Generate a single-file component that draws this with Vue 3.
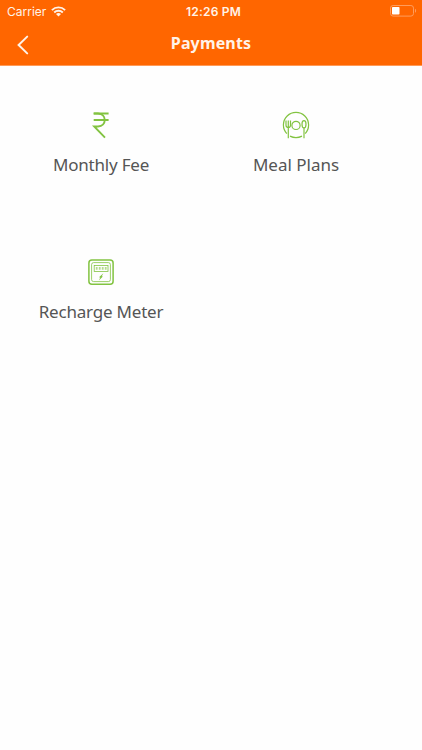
<template>
  <div class="screen">
    <header class="header">
      <div class="status-bar">
        <div class="status-left">
          <span class="carrier">Carrier</span>
          <svg class="wifi" width="15" height="11" viewBox="0 0 15 11">
            <path d="M0.9 4.1C4.6 0.5 10.4 0.5 14.1 4.1" />
            <path d="M3.2 6.5C5.6 4.2 9.4 4.2 11.8 6.5" />
            <path class="wifi-dot" d="M5 8C6.4 6.7 8.6 6.7 10 8L7.5 10.5Z" />
          </svg>
        </div>
        <span class="clock">12:26 PM</span>
        <svg class="battery" width="27" height="12" viewBox="0 0 27 12">
          <rect class="battery-case" x="0.5" y="0.5" width="23" height="10.6" rx="2.6" />
          <rect class="battery-level" x="2" y="2" width="7.5" height="7.6" rx="0.8" />
          <path class="battery-tip" d="M25 3.8C26.5 4.4 26.5 7.2 25 7.8Z" />
        </svg>
      </div>
      <div class="nav-bar">
        <button class="back-btn" aria-label="Back">
          <svg width="12" height="20" viewBox="0 0 12 20">
            <path d="M10.2 1.6L1.6 10L10.2 18.4" />
          </svg>
        </button>
        <h1 class="title">Payments</h1>
      </div>
    </header>

    <main class="menu">
      <button v-for="item in items" :key="item.icon" class="menu-item">
        <svg v-if="item.icon === 'rupee'" class="icon" width="28" height="28" viewBox="0 0 28 28">
          <g class="rupee">
            <path d="M6.7 2.5H21.6M6.7 9H21.6" />
            <path d="M6.7 2.5H11C20 2.8 20 15.3 11 15.5H7.2L18 26.6" />
          </g>
        </svg>
        <svg v-else-if="item.icon === 'meal'" class="icon" width="28" height="28" viewBox="0 0 28 28">
          <path d="M4.8 22.6A12.6 12.6 0 1 1 23.2 22.6M8 25.1Q14 28.2 20 25.1" />
          <circle cx="14" cy="14.4" r="4.1" />
          <path d="M4 9.6V14.2Q4 16.4 6.3 16.4Q8.5 16.4 8.5 14.2V9.6M6.3 9.6V27.2" />
          <ellipse cx="22" cy="13.2" rx="2" ry="3.6" />
          <path d="M22 16.8V27.2" />
        </svg>
        <svg v-else class="icon" width="28" height="28" viewBox="0 0 28 28">
          <rect class="meter-case" x="1.9" y="1.9" width="24.2" height="24.4" rx="3" />
          <rect class="meter-inner" x="4.6" y="4.6" width="18.8" height="19" rx="2" />
          <rect class="meter-inner" x="7.2" y="7.4" width="13.8" height="6" />
          <path class="meter-digits" d="M8.8 10.4H20" />
          <path class="bolt" d="M16.4 15.2L12 19.2L13.3 19.5L11.8 22.6L15.9 18.6L14.8 18.2Z" />
        </svg>
        <span class="label" :class="item.icon">{{ item.label }}</span>
      </button>
    </main>
  </div>
</template>

<script setup>
const items = [
  { icon: "rupee", label: "Monthly Fee" },
  { icon: "meal", label: "Meal Plans" },
  { icon: "meter", label: "Recharge Meter" },
];
</script>

<style>
body {
  background-color: #fff;
}
</style>

<style scoped>
.screen {
  min-height: 750px;
  background-color: #fefefe;
  font-family: "Noto Sans", "Open Sans", sans-serif;
}

.header {
  height: 65px;
  background-color: #ff6600;
  border-bottom: 1px solid #ff9a57;
  color: #fff3e8;
}

/* 狀態列 */
.status-bar {
  display: grid;
  grid-template-columns: 1fr auto 1fr;
  align-items: center;
  height: 22px;
  padding: 0 5px 0 7px;
  font-family: Inter, sans-serif;
}

.status-left {
  display: flex;
  align-items: center;
  gap: 5px;
}

.carrier {
  font-size: 12px;
  letter-spacing: 0;
}

.wifi path {
  fill: none;
  stroke: #fff3e8;
  stroke-width: 1.9;
}

.wifi .wifi-dot {
  fill: #fff3e8;
  stroke: none;
}

.clock {
  font-size: 12px;
  font-weight: 600;
  letter-spacing: 0.2px;
  margin-left: 3px;
}

.battery {
  justify-self: end;
}

.battery-case {
  fill: none;
  stroke: #ff9c5c;
}

.battery-level {
  fill: #fff;
}

.battery-tip {
  fill: #ff9c5c;
}

/* 標題列 */
.nav-bar {
  display: grid;
  grid-template-columns: 46px 1fr 46px;
  align-items: center;
  height: 43px;
}

.back-btn {
  display: flex;
  padding: 3px 0 0 17px;
  border: none;
  background: none;
  cursor: pointer;
}

.back-btn path {
  fill: none;
  stroke: #fff3e8;
  stroke-width: 2;
  stroke-linecap: round;
}

.title {
  margin: 0;
  font-size: 16px;
  font-weight: 700;
  letter-spacing: 0.15px;
  line-height: 43px;
  text-align: center;
}

/* 選單 */
.menu {
  display: grid;
  grid-template-columns: 195px 195px;
  grid-auto-rows: 147px;
  padding: 45px 0 0 3px;
}

.menu-item {
  display: flex;
  flex-direction: column;
  align-items: center;
  padding: 0;
  border: none;
  background: none;
  font-family: inherit;
  cursor: pointer;
}

.icon {
  fill: none;
  stroke: #82c341;
  stroke-width: 1.2;
}

.rupee {
  stroke-width: 1.9;
}

.meter-case {
  stroke-width: 1.5;
}

.meter-inner {
  stroke-width: 0.8;
}

.meter-digits {
  stroke-width: 2.6;
  stroke-dasharray: 1.8 1.2;
  opacity: 0.6;
}

.bolt {
  fill: #82c341;
  stroke: none;
}

.label {
  margin: 14px 0 0 1px;
  color: #555;
  font-size: 17px;
  letter-spacing: -0.2px;
  line-height: 24px;
  white-space: nowrap;
}

.label.meal {
  letter-spacing: 0;
}
</style>
